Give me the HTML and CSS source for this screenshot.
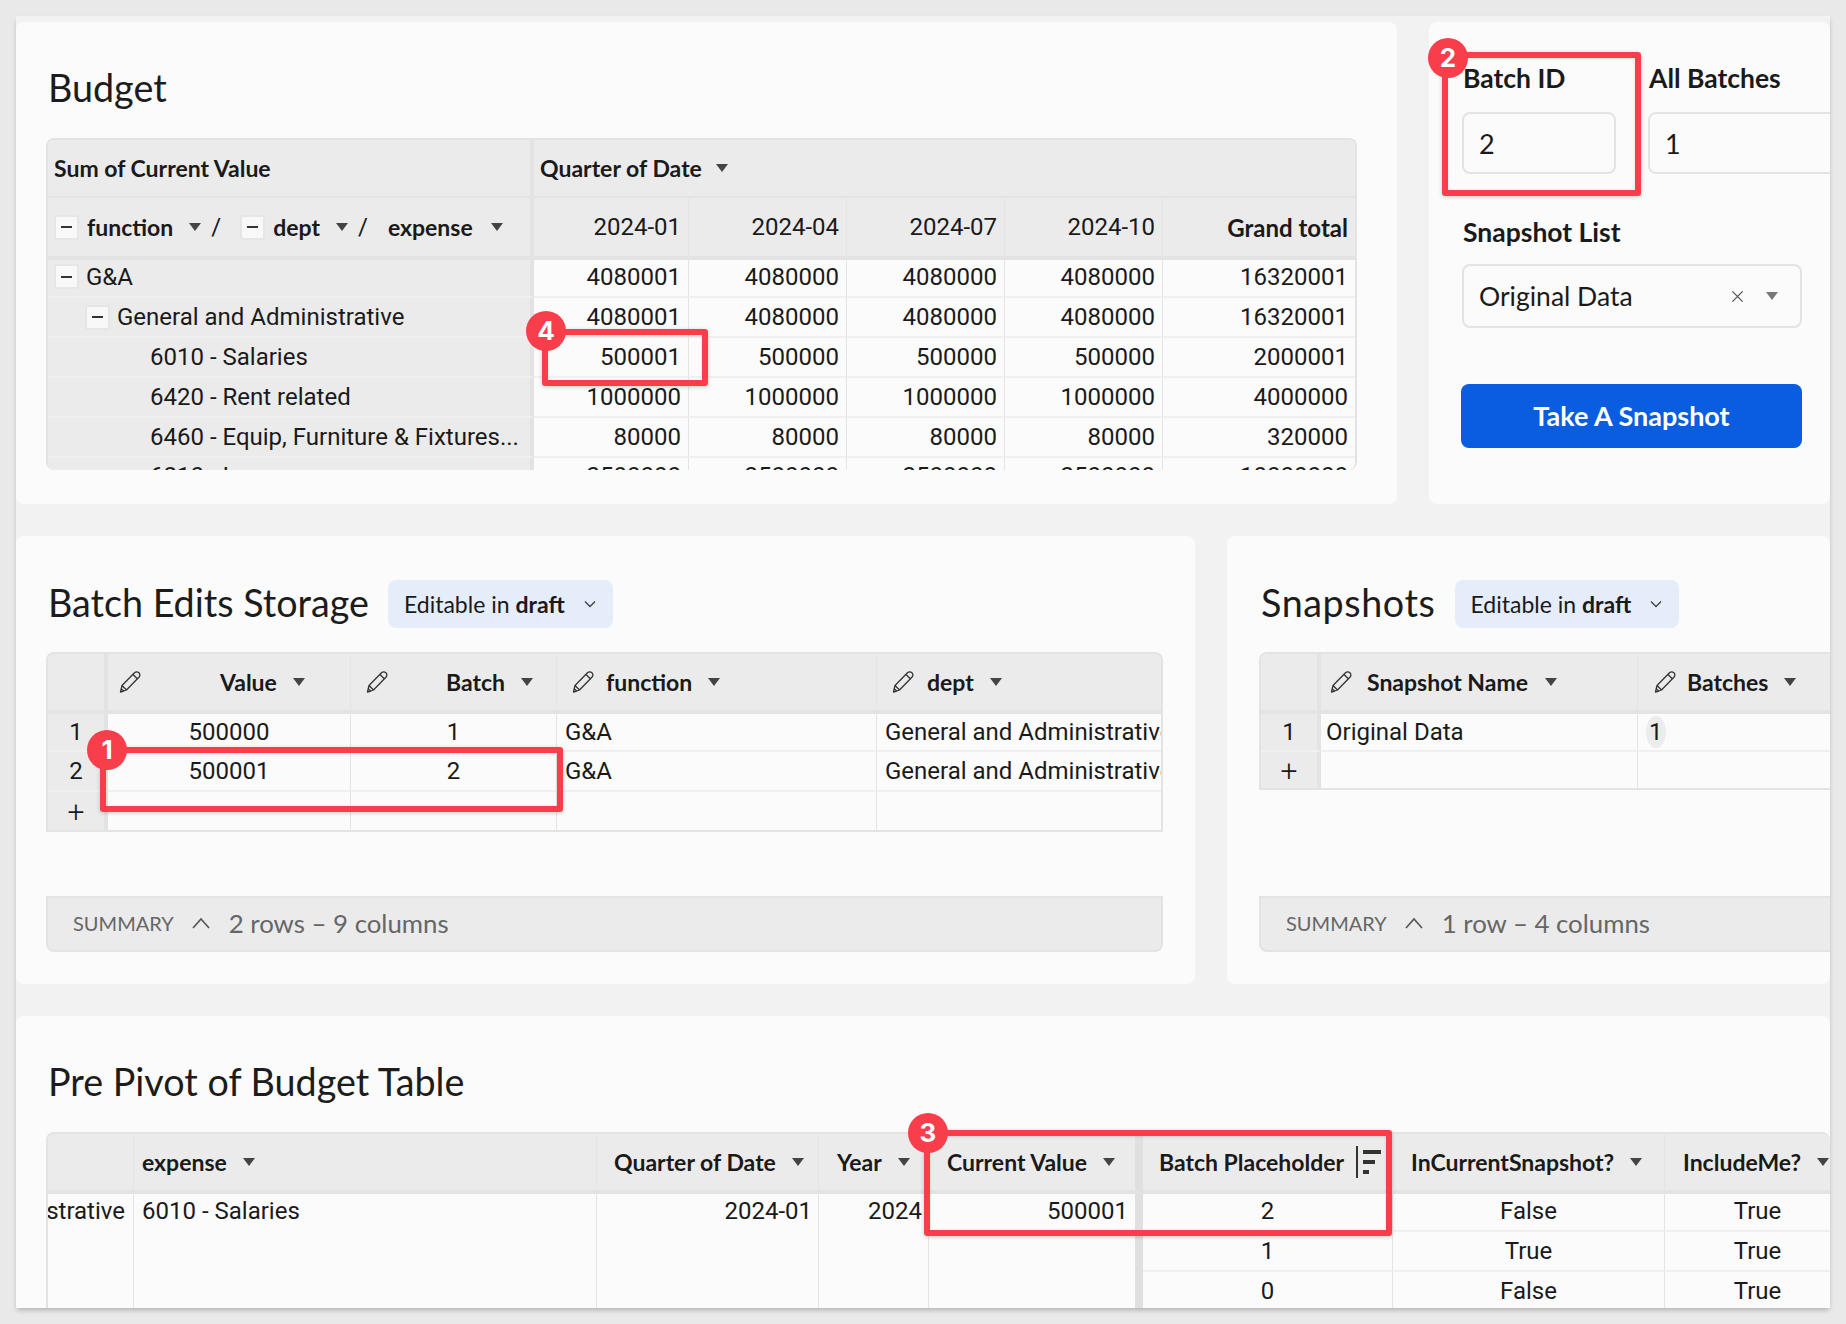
FILE: index.html
```html
<!DOCTYPE html>
<html lang="en">
<head>
  <meta charset="UTF-8">
  <title>Budget Workbook</title>
  <link rel="stylesheet" href="styles.css">
</head>
<body>

<svg class="defs" width="0" height="0">
  <symbol id="pencil" viewBox="0 0 24 24">
    <path d="M2.5 22 L4 15.5 L16.5 2.8 C17.8 1.5 19.6 1.5 20.9 2.8 C22.2 4.1 22.2 5.9 20.9 7.2 L8.5 20 Z M4 15.5 L8.5 20 M15 4.5 L19.5 9 M2.5 22 L5.8 21.2 L3.2 18.6 Z" fill="none" stroke="#333" stroke-width="1.3" stroke-linejoin="round"/>
  </symbol>
  <symbol id="chev-down" viewBox="0 0 14 14">
    <path d="M2 4.5 L7 9.5 L12 4.5" fill="none" stroke="#444" stroke-width="1.4"/>
  </symbol>
  <symbol id="chev-up" viewBox="0 0 20 14">
    <path d="M2 12 L10 3 L18 12" fill="none" stroke="#555" stroke-width="1.6"/>
  </symbol>
  <symbol id="cross" viewBox="0 0 14 14">
    <path d="M1.5 1.5 L12.5 12.5 M12.5 1.5 L1.5 12.5" fill="none" stroke="#555" stroke-width="1.4"/>
  </symbol>
</svg>

<div class="window">

  <div class="row row-top">
    <section class="card card-budget">
      <h2 class="title">Budget</h2>
      <div class="table pivot">
        <div class="cell head side"><b>Sum of Current Value</b></div>
        <div class="cell head span-all"><b>Quarter of Date</b><i class="caret caret-q"></i></div>

        <div class="cell head side thick levels">
          <span class="minus"></span><b class="lv lv-function">function</b><i class="caret"></i><span class="slash">/</span>
          <span class="minus"></span><b class="lv lv-dept">dept</b><i class="caret"></i><span class="slash">/</span>
          <b class="lv lv-expense">expense</b><i class="caret"></i>
        </div>
        <div class="cell head thick num line">2024-01</div>
        <div class="cell head thick num line">2024-04</div>
        <div class="cell head thick num line">2024-07</div>
        <div class="cell head thick num line">2024-10</div>
        <div class="cell head thick num total"><b>Grand total</b></div>

        <div class="cell side first"><span class="minus"></span>G&amp;A</div>
        <div class="cell num line first">4080001</div><div class="cell num line first">4080000</div><div class="cell num line first">4080000</div><div class="cell num line first">4080000</div><div class="cell num total first">16320001</div>

        <div class="cell side indent-1"><span class="minus"></span>General and Administrative</div>
        <div class="cell num line">4080001</div><div class="cell num line">4080000</div><div class="cell num line">4080000</div><div class="cell num line">4080000</div><div class="cell num total">16320001</div>

        <div class="cell side indent-2">6010 - Salaries</div>
        <div class="cell num line">500001</div><div class="cell num line">500000</div><div class="cell num line">500000</div><div class="cell num line">500000</div><div class="cell num total">2000001</div>

        <div class="cell side indent-2">6420 - Rent related</div>
        <div class="cell num line">1000000</div><div class="cell num line">1000000</div><div class="cell num line">1000000</div><div class="cell num line">1000000</div><div class="cell num total">4000000</div>

        <div class="cell side indent-2">6460 - Equip, Furniture &amp; Fixtures...</div>
        <div class="cell num line">80000</div><div class="cell num line">80000</div><div class="cell num line">80000</div><div class="cell num line">80000</div><div class="cell num total">320000</div>

        <div class="cell side indent-2 peek">6810 - Insurance</div>
        <div class="cell num line peek">2500000</div><div class="cell num line peek">2500000</div><div class="cell num line peek">2500000</div><div class="cell num line peek">2500000</div><div class="cell num total peek">10000000</div>
      </div>
    </section>

    <section class="card card-controls">
      <div class="inputs">
        <div class="field">
          <label class="label">Batch ID</label>
          <div class="input">2</div>
        </div>
        <div class="field">
          <label class="label">All Batches</label>
          <div class="input input-long">1</div>
        </div>
      </div>
      <label class="label label-list">Snapshot List</label>
      <div class="input select">
        <span>Original Data</span>
        <svg class="clear"><use href="#cross"/></svg>
        <i class="caret caret-grey"></i>
      </div>
      <button class="primary">Take A Snapshot</button>
    </section>
  </div>

  <div class="row row-mid">
    <section class="card card-edits">
      <div class="title-row">
        <h2 class="title">Batch Edits Storage</h2>
        <div class="pill">Editable in <b>draft</b><svg class="chev"><use href="#chev-down"/></svg></div>
      </div>
      <div class="table edits">
        <div class="cell head rownum"></div>
        <div class="cell head line hc-value"><svg class="pencil"><use href="#pencil"/></svg><b>Value</b><i class="caret"></i></div>
        <div class="cell head line hc-batch"><svg class="pencil"><use href="#pencil"/></svg><b>Batch</b><i class="caret"></i></div>
        <div class="cell head line hc-func"><svg class="pencil"><use href="#pencil"/></svg><b>function</b><i class="caret"></i></div>
        <div class="cell head hc-dept"><svg class="pencil"><use href="#pencil"/></svg><b>dept</b><i class="caret"></i></div>

        <div class="cell rownum">1</div>
        <div class="cell mid line">500000</div><div class="cell mid line">1</div><div class="cell line">G&amp;A</div><div class="cell clip">General and Administrative</div>

        <div class="cell rownum">2</div>
        <div class="cell mid line">500001</div><div class="cell mid line">2</div><div class="cell line">G&amp;A</div><div class="cell clip">General and Administrative</div>

        <div class="cell rownum plus">+</div>
        <div class="cell line"></div><div class="cell line"></div><div class="cell line"></div><div class="cell"></div>
      </div>
      <div class="summary">
        <span class="summary-tag">SUMMARY</span><svg class="chev-up"><use href="#chev-up"/></svg><span class="summary-text">2 rows – 9 columns</span>
      </div>
    </section>

    <section class="card card-snaps">
      <div class="title-row">
        <h2 class="title">Snapshots</h2>
        <div class="pill">Editable in <b>draft</b><svg class="chev"><use href="#chev-down"/></svg></div>
      </div>
      <div class="table snaps">
        <div class="cell head rownum"></div>
        <div class="cell head line hc-name"><svg class="pencil"><use href="#pencil"/></svg><b>Snapshot Name</b><i class="caret"></i></div>
        <div class="cell head hc-batches"><svg class="pencil"><use href="#pencil"/></svg><b>Batches</b><i class="caret"></i></div>

        <div class="cell rownum">1</div>
        <div class="cell line snap-name">Original Data</div><div class="cell"><span class="chip">1</span></div>

        <div class="cell rownum plus">+</div>
        <div class="cell line"></div><div class="cell"></div>
      </div>
      <div class="summary">
        <span class="summary-tag">SUMMARY</span><svg class="chev-up"><use href="#chev-up"/></svg><span class="summary-text">1 row – 4 columns</span>
      </div>
    </section>
  </div>

  <section class="card card-pre">
    <h2 class="title">Pre Pivot of Budget Table</h2>
    <div class="table pre">
      <div class="cell head line"></div>
      <div class="cell head line"><b>expense</b><i class="caret"></i></div>
      <div class="cell head line hc-quarter"><b>Quarter of Date</b><i class="caret"></i></div>
      <div class="cell head line hc-year"><b>Year</b><i class="caret"></i></div>
      <div class="cell head freeze hc-current"><b>Current Value</b><i class="caret"></i></div>
      <div class="cell head line hc-holder"><b>Batch Placeholder</b>
        <span class="sort"><i class="sort-a"></i><i class="sort-b"></i><i class="sort-c"></i></span>
      </div>
      <div class="cell head line hc-snap"><b>InCurrentSnapshot?</b><i class="caret"></i></div>
      <div class="cell head hc-incl"><b>IncludeMe?</b><i class="caret"></i></div>

      <div class="cell tall line cut">strative</div>
      <div class="cell tall line">6010 - Salaries</div>
      <div class="cell tall line right">2024-01</div>
      <div class="cell tall line right tight">2024</div>
      <div class="cell tall freeze right">500001</div>
      <div class="cell mid line first">2</div><div class="cell mid line first">False</div><div class="cell mid first">True</div>
      <div class="cell mid line">1</div><div class="cell mid line">True</div><div class="cell mid">True</div>
      <div class="cell mid line">0</div><div class="cell mid line">False</div><div class="cell mid">True</div>
    </div>
  </section>

</div>

<!-- red callouts drawn over the screenshot -->
<div class="mark mark-1"></div><div class="badge badge-1">1</div>
<div class="mark mark-2"></div><div class="badge badge-2">2</div>
<div class="mark mark-3"></div><div class="badge badge-3">3</div>
<div class="mark mark-4"></div><div class="badge badge-4">4</div>

</body>
</html>
```

FILE: styles.css
```css
* {
  box-sizing: border-box;
}
body {
  position: relative;
  margin: 0;
  width: 1846px;
  height: 1324px;
  overflow: hidden;
  background: #e9e9e9;
  font-family: "Lato", "Noto Sans", sans-serif;
  color: #1a1a1a;
}
.defs {
  position: absolute;
}
.window {
  margin: 16px 0 0 16px;
  width: 1814px;
  height: 1292px;
  padding-top: 6px;
  overflow: hidden;
  background: #f2f2f2;
  box-shadow: 0 3px 5px -1px rgba(0,0,0,0.25);
}
.row {
  display: flex;
  gap: 32px;
  margin-bottom: 32px;
}
.row-top {
  height: 482px;
}
.row-mid {
  height: 448px;
}
.card {
  background: #fbfbfb;
  border-radius: 8px;
  overflow: hidden;
}
.title {
  margin: 0 0 2px;
  font-size: 37.7px;
  line-height: 42px;
  font-weight: 400;
  padding-left: 2px;
  color: #1c1c1c;
}

/* tables */
.table {
  display: grid;
  border: 2px solid #e3e3e3;
  border-bottom: 0;
  border-radius: 8px 8px 0 0;
  overflow: hidden;
}
.cell {
  display: flex;
  align-items: center;
  min-width: 0;
  padding: 0 8px;
  font-family: "Roboto", sans-serif;
  font-size: 24px;
  white-space: nowrap;
  border-bottom: 2px solid #f0f0f0;
}
.cell b {
  font-family: "Lato", sans-serif;
  font-size: 23px;
  font-weight: 700;
}
.first {
  padding-bottom: 3px;
}
.peek {
  padding-bottom: 3px;
}
.head {
  background: #ebebeb;
  border-bottom-color: #e3e3e3;
}
.line {
  border-right: 1px solid #e4e4e4;
}
.num {
  justify-content: flex-end;
}
.mid {
  justify-content: center;
}
.right {
  justify-content: flex-end;
}
.clip {
  overflow: hidden;
}
.caret {
  display: inline-block;
  flex: none;
  width: 0;
  height: 0;
  margin-left: 16px;
  border-left: 6.5px solid transparent;
  border-right: 6.5px solid transparent;
  border-top: 8px solid #444;
}
.caret-grey {
  border-top-color: #777;
}
.pencil {
  flex: none;
  width: 24px;
  height: 24px;
}
.minus {
  flex: none;
  position: relative;
  width: 25px;
  height: 25px;
  margin-right: 7px;
  background: #f8f8f8;
  border: 2px solid #e6e6e6;
  border-radius: 2px;
}
.minus::before {
  content: "";
  position: absolute;
  left: 5px;
  top: 9.5px;
  width: 11px;
  height: 2px;
  background: #333;
}

/* budget pivot */
.card-budget {
  width: 1381px;
  padding: 45px 40px 0 30px;
}
.pivot {
  margin-top: 29px;
  height: 332px;
  border-radius: 8px;
  grid-template-columns: 486px 155px 158px 158px 158px 192px;
  grid-template-rows: 58px 62px 38px repeat(5, 40px);
}
.span-all {
  grid-column: 2 / -1;
  padding-left: 6px;
}
.caret-q {
  margin-left: 14px;
}
.side {
  background: #ebebeb;
  border-right: 4px solid #e3e3e3;
  padding-left: 6px;
}
.thick {
  border-bottom-width: 4px;
  border-bottom-color: #e3e3e3;
}
.levels .caret {
  margin-left: 16px;
}
.levels .minus {
  margin-right: 8px;
}
.slash {
  margin: 0 19px 0 10px;
}
.lv-expense {
  margin-left: 1px;
}
.levels .lv-expense + .caret {
  margin-left: 18px;
}
.indent-1 {
  padding-left: 37px;
}
.indent-2 {
  padding-left: 102px;
}
.pivot .num {
  padding-right: 7px;
}
.pivot .total {
  padding-right: 7px;
}
.pivot .total b {
  font-size: 24px;
}

/* controls */
.card-controls {
  flex: 1;
  padding: 40px 0 0 33px;
}
.inputs {
  display: flex;
  gap: 32px;
}
.field {
  flex: none;
}
.label {
  display: block;
  padding-left: 1px;
  font-size: 26.5px;
  line-height: 32px;
  font-weight: 700;
}
.input {
  display: flex;
  align-items: center;
  width: 154px;
  height: 62px;
  margin-top: 18px;
  padding-left: 15px;
  background: #fbfbfb;
  border: 2px solid #e3e3e3;
  border-radius: 8px;
  font-size: 27px;
}
.input-long {
  width: 260px;
}
.label-list {
  margin-top: 42px;
}
.select {
  width: 340px;
  height: 64px;
  margin-top: 16px;
  font-size: 26.5px;
}
.clear {
  flex: none;
  width: 13px;
  height: 13px;
  margin-left: auto;
  margin-right: 4px;
}
.select .caret {
  margin: 0 22px 0 18px;
}
.primary {
  display: block;
  width: 341px;
  height: 64px;
  margin-top: 56px;
  margin-left: -1px;
  padding-bottom: 3px;
  background: #0a5ce1;
  color: #fff;
  border: 0;
  border-radius: 8px;
  font-family: "Lato", sans-serif;
  font-size: 27px;
  font-weight: 700;
}

/* batch edits + snapshots */
.card-edits {
  display: flex;
  flex-direction: column;
  width: 1179px;
  padding: 44px 32px 32px 30px;
}
.card-snaps {
  flex: 1;
  display: flex;
  flex-direction: column;
  padding: 44px 0 32px 32px;
}
.title-row {
  display: flex;
  align-items: center;
  gap: 19px;
  height: 48px;
}
.card-snaps .title-row {
  gap: 19px;
}
.card-snaps .title {
  letter-spacing: 0.6px;
}
.pill {
  display: flex;
  align-items: center;
  height: 48px;
  padding: 0 16px 0 16px;
  background: #e5edfb;
  border-radius: 8px;
  font-size: 23px;
  white-space: pre;
}
.pill b {
  font-weight: 700;
}
.chev {
  width: 14px;
  height: 14px;
  margin-left: 18px;
}
.edits, .snaps {
  margin-top: 24px;
}
.edits {
  grid-template-columns: 60px 243px 206px 320px 1fr;
  grid-template-rows: 60px 38px 40px 40px;
}
.snaps {
  margin-right: -20px;
  border-right: 0;
  grid-template-columns: 60px 317px 1fr;
  grid-template-rows: 60px 38px 38px;
}
.edits > .head, .snaps > .head {
  border-bottom-width: 4px;
}
.edits > .cell:nth-last-child(-n+5), .snaps > .cell:nth-last-child(-n+3) {
  border-bottom-color: #e3e3e3;
}
.rownum {
  justify-content: center;
  background: #ebebeb;
  border-right: 4px solid #e3e3e3;
  padding: 0;
}
.plus {
  font-size: 30px;
  font-weight: 300;
}
.hc-value, .hc-batch, .hc-func, .hc-dept {
  padding-left: 14px;
}
.hc-value {
  padding-left: 10px;
}
.hc-name {
  padding-left: 8px;
}
.hc-batches {
  padding-left: 15px;
}
.hc-value b { margin-left: 78px; }
.hc-batch b { margin-left: 57px; }
.hc-func b { margin-left: 11px; }
.hc-dept b { margin-left: 12px; }
.hc-name b { margin-left: 14px; }
.hc-name .caret { margin-left: 17px; }
.hc-batches b { margin-left: 10px; }
.snap-name {
  padding-left: 5px;
}
.chip {
  padding: 2px 3px;
  background: #ececec;
  border-radius: 50%;
}
.summary {
  display: flex;
  align-items: center;
  height: 56px;
  margin-top: auto;
  padding: 0 0 2px 25px;
  background: #ebebeb;
  border: 2px solid #e3e3e3;
  border-radius: 0 0 8px 8px;
  color: #666;
}
.card-snaps .summary {
  margin-right: -20px;
}
.summary-tag {
  font-size: 20px;
}
.chev-up {
  width: 20px;
  height: 14px;
  margin-left: 17px;
}
.summary-text {
  margin-left: 18px;
  font-size: 25.8px;
}

/* pre pivot */
.card-pre {
  padding: 45px 0 0 30px;
}
.pre {
  margin-top: 29px;
  border-right: 0;
  grid-template-columns: 86px 463px 222px 110px 214px 250px 272px 185px;
  grid-template-rows: 60px 38px 40px 40px;
}
.pre > .head {
  border-bottom-width: 4px;
}
.tall {
  grid-row: span 3;
  align-items: flex-start;
  padding-top: 3px;
  border-bottom: 0;
}
.cut {
  justify-content: flex-end;
  overflow: hidden;
  padding: 3px 8px 0 0;
}
.right {
  padding-right: 6px;
}
.tight {
  padding-right: 6px;
}
.pre .freeze.right {
  padding-right: 7px;
}
.freeze {
  border-right: 8px solid #e0e0e0;
}
.hc-quarter { padding-left: 17px; }
.hc-year { padding-left: 18px; }
.hc-current { padding-left: 18px; }
.hc-holder { padding-left: 16px; }
.hc-snap { padding-left: 18px; }
.hc-incl { padding-left: 18px; }
.sort {
  position: relative;
  display: block;
  flex: none;
  width: 24px;
  height: 32px;
  margin-left: 12px;
  border-left: 2px solid #333;
}
.sort i {
  display: block;
  height: 4px;
  margin: 4px 0 6px 5px;
  background: #333;
}
.sort-a { width: 18px; }
.sort-b { width: 12px; }
.sort-c { width: 6px; }

/* callouts */
.mark {
  position: absolute;
  border: 6px solid #f83e4b;
  border-radius: 3px;
  box-shadow: 0 1px 4px rgba(0,0,0,0.2), inset 0 1px 3px rgba(0,0,0,0.12);
}
.badge {
  position: absolute;
  width: 40px;
  height: 40px;
  margin: -20px 0 0 -20px;
  border-radius: 50%;
  background: #f83e4b;
  color: #fff;
  font-family: "Inter", sans-serif;
  font-size: 26px;
  font-weight: 700;
  line-height: 40px;
  text-align: center;
}
.mark-1 { left: 100px; top: 747px; width: 463px; height: 65px; }
.badge-1 { left: 107px; top: 750px; }
.mark-2 { left: 1442px; top: 52px; width: 199px; height: 144px; }
.badge-2 { left: 1448px; top: 58px; }
.mark-3 { left: 924px; top: 1130px; width: 468px; height: 106px; }
.badge-3 { left: 928px; top: 1133px; }
.mark-4 { left: 542px; top: 329px; width: 166px; height: 57px; }
.badge-4 { left: 546px; top: 331px; }
```
